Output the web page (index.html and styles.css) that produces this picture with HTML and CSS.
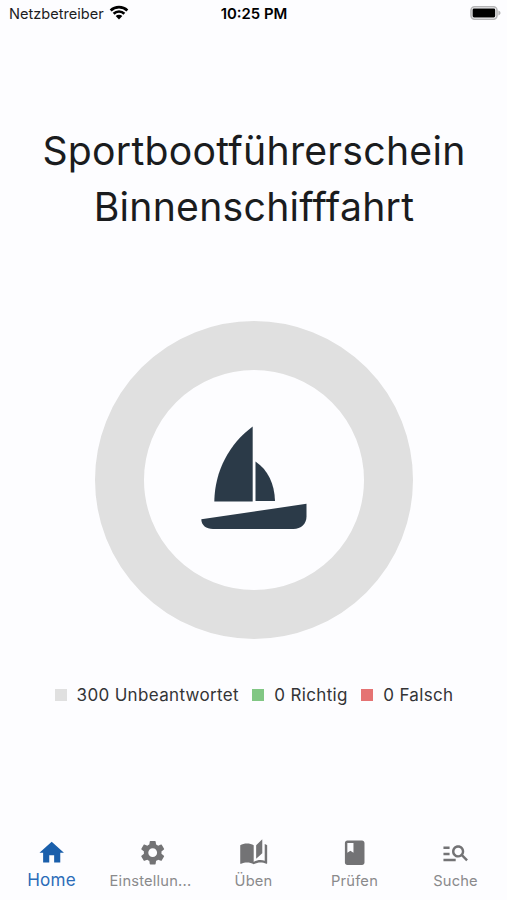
FILE: index.html
```
<!DOCTYPE html>
<html lang="de">
<head>
    <meta charset="UTF-8">
    <meta name="viewport" content="width=device-width, initial-scale=1.0">
    <title>Sportbootführerschein Binnenschifffahrt</title>
    <link rel="stylesheet" href="styles.css">
</head>
<body>
    <div class="status-bar">
        <div class="carrier">
            <span>Netzbetreiber</span>
            <svg class="wifi" viewBox="0 0 18 14">
                <path d="M1.2 5.2a11.2 11.2 0 0 1 15.6 0M4 8.1a7.2 7.2 0 0 1 10 0" />
                <path class="dot" d="M9 13.5L5.9 10.3a4.5 4.5 0 0 1 6.2 0z" />
            </svg>
        </div>
        <div class="time">10:25 PM</div>
        <svg class="battery" viewBox="0 0 31 14">
            <rect class="case" x="1" y="0.8" width="26" height="12.4" rx="3.6" />
            <rect x="2.6" y="2.6" width="22.6" height="8.8" rx="1.4" />
            <path class="cap" d="M28.4 4.6c2.8 1 2.8 3.8 0 4.8z" />
        </svg>
    </div>

    <h1>Sportbootführerschein<br>Binnenschifffahrt</h1>

    <div class="chart">
        <svg class="boat" viewBox="0 0 106 104">
            <path d="M51.7 0.5V75.5H13.3C13.8 45 28 18 51.7 0.5z" />
            <path d="M54.5 35.5C67 44 73.5 58 74 75H54.5z" />
            <path d="M0.3 93.3L105.5 77.8V90.5C105.5 98 100 103 92.5 103H12C5 103 0.6 99.5 0.3 93.3z" />
        </svg>
    </div>

    <div class="legend">
        <div class="item"><span class="box open"></span>300 Unbeantwortet</div>
        <div class="item"><span class="box right"></span>0 Richtig</div>
        <div class="item"><span class="box wrong"></span>0 Falsch</div>
    </div>

    <nav>
        <a class="tab active">
            <svg viewBox="0 0 24 24"><path d="M10 20v-6h4v6h5v-8h3L12 3 2 12h3v8z" /></svg>
            <span>Home</span>
        </a>
        <a class="tab">
            <svg viewBox="0 0 24 24"><path d="M19.14 12.94c.04-.3.06-.61.06-.94 0-.32-.02-.64-.07-.94l2.03-1.58c.18-.14.23-.41.12-.61l-1.92-3.32c-.12-.22-.37-.29-.59-.22l-2.39.96c-.5-.38-1.03-.7-1.62-.94l-.36-2.54c-.04-.24-.24-.41-.48-.41h-3.84c-.24 0-.43.17-.47.41l-.36 2.54c-.59.24-1.13.57-1.62.94l-2.39-.96c-.22-.08-.47 0-.59.22L2.74 8.87c-.12.21-.08.47.12.61l2.03 1.58c-.05.3-.09.63-.09.94s.02.64.07.94l-2.03 1.58c-.18.14-.23.41-.12.61l1.92 3.32c.12.22.37.29.59.22l2.39-.96c.5.38 1.03.7 1.62.94l.36 2.54c.05.24.24.41.48.41h3.84c.24 0 .44-.17.47-.41l.36-2.54c.59-.24 1.13-.56 1.62-.94l2.39.96c.22.08.47 0 .59-.22l1.92-3.32c.12-.22.07-.47-.12-.61l-2.01-1.58zM12 15.6c-1.98 0-3.6-1.62-3.6-3.6s1.62-3.6 3.6-3.6 3.6 1.62 3.6 3.6-1.62 3.6-3.6 3.6z" /></svg>
            <span class="long">Einstellun...</span>
        </a>
        <a class="tab">
            <svg viewBox="0 0 24 24"><path d="M19 1l-5 5v11l5-4.5V1zM1 6v14.65c0 .25.25.5.5.5.1 0 .15-.05.25-.05C3.1 20.45 5.05 20 6.5 20c1.95 0 4.05.4 5.5 1.5V6c-1.45-1.1-3.55-1.5-5.5-1.5S2.45 4.9 1 6zm22 13.5V6c-.6-.45-1.25-.75-2-1v13.5c-1.1-.35-2.3-.5-3.5-.5-1.7 0-4.15.65-5.5 1.5v2c1.35-.85 3.8-1.5 5.5-1.5 1.65 0 3.35.3 4.75 1.05.1.05.15.05.25.05.25 0 .5-.25.5-.5v-1.1z" /></svg>
            <span>Üben</span>
        </a>
        <a class="tab">
            <svg viewBox="0 0 24 24"><path d="M18 2H6c-1.1 0-2 .9-2 2v16c0 1.1.9 2 2 2h12c1.1 0 2-.9 2-2V4c0-1.1-.9-2-2-2zM6 4h5v8l-2.5-1.5L6 12V4z" /></svg>
            <span>Prüfen</span>
        </a>
        <a class="tab">
            <svg viewBox="0 0 24 24"><path d="M7 9H2V7h5v2zm0 3H2v2h5v-2zm13.59 7l-3.83-3.83c-.8.52-1.74.83-2.76.83-2.76 0-5-2.24-5-5s2.24-5 5-5 5 2.24 5 5c0 1.02-.31 1.96-.83 2.75L22 17.59 20.59 19zM17 11c0-1.65-1.35-3-3-3s-3 1.35-3 3 1.35 3 3 3 3-1.35 3-3zM2 19h10v-2H2v2z" /></svg>
            <span>Suche</span>
        </a>
    </nav>
</body>
</html>
```
FILE: styles.css
```
* {
    box-sizing: border-box;
}

body {
    margin: 0;
    height: 900px;
    display: flex;
    flex-direction: column;
    align-items: center;
    background-color: #fdfdff;
    color: #1a1c1e;
    font-family: Inter, "Liberation Sans", sans-serif;
    white-space: nowrap;
    overflow: hidden;
}

.status-bar {
    width: 100%;
    height: 27px;
    padding: 0 6px 0 9px;
    display: grid;
    grid-template-columns: 1fr auto 1fr;
    align-items: center;
    color: #000;
    font-size: 14.6px;
}

.carrier {
    display: flex;
    align-items: center;
    gap: 5px;
    color: #1c1c1e;
}

.wifi {
    width: 20px;
    height: 15px;
    margin-top: -2px;
    fill: none;
    stroke: #000;
    stroke-width: 2.5;
}

.wifi .dot {
    fill: #000;
    stroke: none;
}

.time {
    margin-right: 2px;
    font-size: 14.9px;
    font-weight: 600;
}

.battery {
    width: 31px;
    height: 14px;
    margin-top: -1px;
    justify-self: end;
}

.battery .case {
    fill: none;
    stroke: #b4b4b6;
    stroke-width: 1.6;
}

.battery .cap {
    fill: #b4b4b6;
}

h1 {
    margin: 96px 0 0 1px;
    font-size: 39.2px;
    font-weight: 400;
    line-height: 56px;
    letter-spacing: 0.25px;
    text-align: center;
}

.chart {
    width: 318px;
    height: 318px;
    margin-top: 86px;
    border: 49px solid #e0e0e0;
    border-radius: 50%;
    display: flex;
    align-items: center;
    justify-content: center;
}

.boat {
    width: 106px;
    height: 104px;
    margin-bottom: 4px;
    fill: #2b3a48;
}

.legend {
    margin-top: 44px;
    margin-left: 1px;
    display: flex;
    gap: 13.5px;
    font-size: 17px;
    line-height: 24px;
    letter-spacing: 0.33px;
    color: #333436;
}

.item {
    display: flex;
    align-items: center;
    gap: 10px;
}

.box {
    width: 12px;
    height: 12px;
}

.open {
    background-color: #e0e0e0;
}

.right {
    background-color: #81c784;
}

.wrong {
    background-color: #e57373;
}

nav {
    width: 100%;
    margin-top: auto;
    height: 62.5px;
    padding: 0 1px;
    display: flex;
}

.tab {
    flex: 1;
    display: flex;
    flex-direction: column;
    align-items: center;
    color: #8a8a8c;
    font-size: 14.7px;
    letter-spacing: 0.2px;
}

.tab svg {
    width: 29.4px;
    height: 29.4px;
    fill: #737375;
}

.tab span {
    line-height: 24px;
    margin-top: 2.6px;
}

.tab .long {
    margin-right: 4px;
}

.active {
    color: #2b6cb8;
    font-size: 17.1px;
}

.active span {
    margin-top: 1.6px;
}

.active svg {
    fill: #1a5fab;
}
```
